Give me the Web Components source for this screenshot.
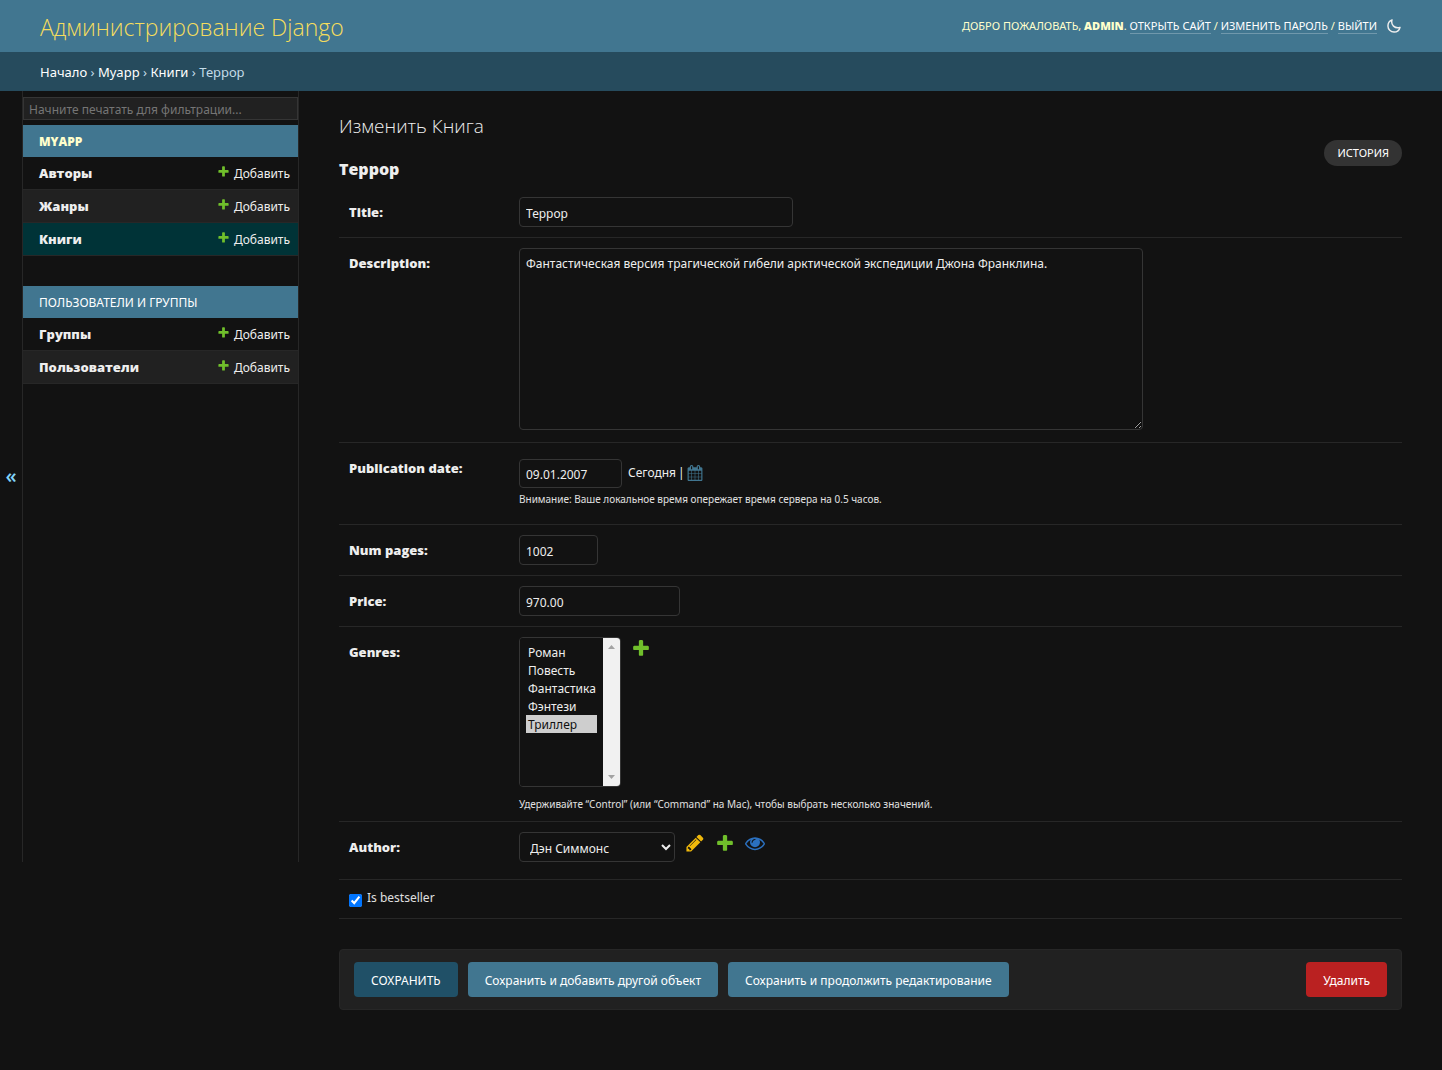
<!DOCTYPE html>
<html lang="ru">
<head>
<meta charset="utf-8">
<meta name="viewport" content="width=device-width, initial-scale=1">
<title>Террор | Изменить Книга | Администрирование Django</title>
<style>
  :root {
    --primary: #417690;
    --secondary: #264b5d;
    --accent: #ffffcc;
    --title: #f5dd5d;
    --body-bg: #121212;
    --darkened-bg: #212121;
    --body-fg: #eeeeee;
    --quiet-fg: #e0e0e0;
    --hairline: #272727;
    --border: #353535;
    --link: #81d4fa;
    --heading-font: "Open Sans", "Noto Sans", sans-serif;
  }
  body {
    margin: 0;
    min-height: 100vh;
    background: var(--body-bg);
    color: var(--body-fg);
    font: 12px/18px "Noto Sans", "Open Sans", sans-serif;
  }
</style>
</head>
<body>
<admin-page></admin-page>

<template id="admin-page">
  <style>
    :host { display: block; }
    .columns { display: flex; align-items: flex-start; }
    book-form { flex: 1; min-width: 0; }
  </style>
  <admin-header></admin-header>
  <admin-breadcrumbs></admin-breadcrumbs>
  <div class="columns">
    <nav-sidebar></nav-sidebar>
    <book-form></book-form>
  </div>
</template>

<template id="admin-header">
  <style>
    :host { display: block; }
    header {
      display: flex; align-items: center; justify-content: space-between;
      min-height: 52px; padding: 0 40px; box-sizing: border-box;
      background: var(--primary); color: var(--accent);
    }
    h1 { margin: 0; padding-top: 2px; font-family: var(--heading-font); font-size: 23px; line-height: 32px; font-weight: 300; }
    h1 a { color: var(--title); text-decoration: none; }
    .tools { display: flex; align-items: center; gap: 9px; font-size: 11px; line-height: 14px; text-transform: uppercase; }
    .tools a { color: #fff; text-decoration: none; border-bottom: 1px solid rgba(255,255,255,.25); }
    strong { font-family: var(--heading-font); font-weight: 800; }
    button { display: flex; padding: 0; border: 0; background: none; color: var(--body-fg); }
    svg { width: 16px; height: 16px; }
  </style>
  <header>
    <h1><a href="#">Администрирование Django</a></h1>
    <div class="tools">
      <span>Добро пожаловать, <strong>admin</strong>. <a href="#">Открыть сайт</a> / <a href="#">Изменить пароль</a> / <a href="#">Выйти</a></span>
      <button type="button" aria-label="Переключить тему">
        <svg viewBox="0 0 512 512" fill="none" stroke="currentColor" stroke-width="46" stroke-linejoin="round"><path d="M195 60C120 90 62 165 62 253c0 108 88 196 196 196 92 0 170-63 191-150-22 9-46 14-71 14-108 0-196-82-196-182 0-25 5-49 13-71z"/></svg>
      </button>
    </div>
  </header>
</template>

<template id="admin-breadcrumbs">
  <style>
    :host { display: block; background: var(--secondary); color: #c4dce8; font-size: 13px; }
    nav { padding: 11px 40px 10px; }
    a { color: #fff; text-decoration: none; }
  </style>
  <nav aria-label="Навигация"><a href="#">Начало</a> › <a href="#">Myapp</a> › <a href="#">Книги</a> › Террор</nav>
</template>

<template id="nav-sidebar">
  <style>
    :host { display: flex; flex: 0 0 299px; min-height: calc(100vh - 299px); }
    .toggle {
      flex: 0 0 23px; padding: 0 0 2px; border: 0; border-right: 1px solid var(--hairline);
      background: none; color: var(--link); font: 600 20px/20px var(--heading-font);
    }
    nav { flex: 1; padding-top: 6px; border-right: 1px solid var(--hairline); }
    input {
      display: block; width: 100%; height: 23px; box-sizing: border-box; margin: 0 0 5px; padding: 2px 5px 1px;
      border: 1px solid var(--border); background: var(--darkened-bg); color: var(--body-fg);
      font: inherit; border-radius: 0;
    }
    input::placeholder { color: #757575; }
  </style>
  <button class="toggle" type="button" aria-label="Свернуть навигацию">«</button>
  <nav aria-label="Боковая панель">
    <input type="search" placeholder="Начните печатать для фильтрации..." aria-label="Фильтр навигации">
    <app-module current>
      <span slot="title">Myapp</span>
      <model-row>Авторы</model-row>
      <model-row alt>Жанры</model-row>
      <model-row current>Книги</model-row>
    </app-module>
    <app-module>
      <span slot="title">Пользователи и группы</span>
      <model-row>Группы</model-row>
      <model-row alt>Пользователи</model-row>
    </app-module>
  </nav>
</template>

<template id="app-module">
  <style>
    :host { display: block; margin-bottom: 30px; }
    h2 { margin: 0; padding: 9px 16px 7px; background: var(--primary); font-size: 12px; line-height: 16px; font-weight: 400; text-transform: uppercase; }
    a { color: #fff; text-decoration: none; }
    :host([current]) h2 { font-family: var(--heading-font); font-weight: 800; }
    :host([current]) a { color: var(--accent); }
  </style>
  <h2><a href="#"><slot name="title"></slot></a></h2>
  <slot></slot>
</template>

<template id="model-row">
  <style>
    :host {
      display: flex; justify-content: space-between; padding: 7px 8px 7px 16px;
      border-bottom: 1px solid var(--hairline);
    }
    :host([alt]) { background: var(--darkened-bg); }
    :host([current]) { background: #003337; }
    a { color: var(--body-fg); text-decoration: none; }
    .name { font-family: var(--heading-font); font-size: 13px; font-weight: 800; }
    .add { display: flex; gap: 4px; margin: 1px 0 -1px; }
  </style>
  <a class="name" href="#"><slot></slot></a>
  <a class="add" href="#"><admin-icon name="add" size="13"></admin-icon>Добавить</a>
</template>

<template id="form-row">
  <style>
    :host { display: flex; padding: 10px; border-bottom: 1px solid var(--hairline); }
    .label { flex: 0 0 170px; padding-top: 6px; font-family: var(--heading-font); font-size: 13px; font-weight: 800; }
    .field { flex: 1; min-width: 0; }
    :host([plain]) .label { display: none; }
  </style>
  <div class="label"><slot name="label"></slot></div>
  <div class="field"><slot></slot></div>
</template>

<template id="submit-row">
  <style>
    :host {
      display: flex; gap: 10px; margin-top: 30px; padding: 12px 14px;
      background: var(--darkened-bg); border: 1px solid var(--hairline); border-radius: 4px;
    }
    button, a {
      height: 35px; padding: 2px 17px 0; border: 0; border-radius: 4px; box-sizing: border-box;
      background: var(--primary); color: #fff; font: inherit; line-height: 34px; text-decoration: none;
    }
    .default { background: #205067; text-transform: uppercase; }
    .delete { margin-left: auto; background: #ba2121; }
  </style>
  <button class="default" type="submit">Сохранить</button>
  <button type="submit">Сохранить и добавить другой объект</button>
  <button type="submit">Сохранить и продолжить редактирование</button>
  <a class="delete" href="#">Удалить</a>
</template>

<template id="book-form">
  <style>
    :host { display: block; padding: 24px 40px 60px; }
    .head { display: flex; justify-content: space-between; align-items: flex-end; }
    h1, h2 { font-family: var(--heading-font); }
    h1 { margin: 0 0 22px; font-size: 19px; line-height: 22px; font-weight: 300; }
    h2 { margin: 0; font-size: 16px; line-height: 20px; font-weight: 800; }
    .history {
      margin-bottom: 13px; padding: 6px 13px; border-radius: 15px; background: #333333;
      color: #fff; font-size: 11px; line-height: 14px; text-decoration: none; text-transform: uppercase;
    }
    form { padding-top: 8px; }
    input, textarea, select {
      display: block; box-sizing: border-box; margin: 0; padding: 6px 6px 4px; height: 30px; max-width: 100%;
      border: 1px solid var(--border); border-radius: 4px;
      background: var(--body-bg); color: var(--body-fg); font: inherit;
    }
    .title { width: 274px; }
    .number { width: 79px; }
    .price { width: 161px; }
    input.date { width: 103px; height: 29px; padding-bottom: 5px; }
    textarea { width: 624px; height: 182px; margin-bottom: 2px; }
    .datetime { display: flex; gap: 6px; padding-top: 6px; }
    .datetime span { display: flex; gap: 2px; padding-top: 5px; }
    .datetime admin-icon { padding-top: 1px; }
    .help { margin: 4px 0 0; color: var(--quiet-fg); font-size: 10px; line-height: 14px; }
    .date-help { padding-bottom: 8px; }
    .list-help { margin-top: 10px; }
    a { color: var(--body-fg); text-decoration: none; }
    .related { display: flex; gap: 10px; }
    .related a { display: flex; height: 22px; align-items: center; }
    .related.single { padding-bottom: 7px; }
    .listbox {
      display: flex; box-sizing: border-box; width: 102px; height: 150px;
      border: 1px solid var(--border); border-radius: 4px; overflow: hidden;
    }
    .listbox select { flex: 1; min-width: 0; height: auto; padding: 5px 6px; border: 0; border-radius: 0; overflow: hidden; }
    option { height: 18px; min-height: 18px; padding: 1px 2px 0; line-height: 18px; box-sizing: border-box; }
    .listbox option:checked { background: #cecece linear-gradient(#cecece, #cecece); color: #101010; }
    .scrollbar {
      display: flex; flex: 0 0 17px; flex-direction: column; align-items: center; justify-content: space-between;
      padding: 7px 0; box-sizing: border-box; background: #f1f1f1;
    }
    .scrollbar svg { width: 7px; height: 4px; fill: #a3a3a3; }
    .author { width: 156px; padding: 3px 6px 1px; }
    .check { display: flex; gap: 5px; margin-top: -1px; padding-bottom: 1px; color: var(--quiet-fg); }
    input[type=checkbox] { width: 13px; height: 13px; margin: 5px 0 0; padding: 0; }
  </style>
  <div class="head">
    <div>
      <h1>Изменить Книга</h1>
      <h2>Террор</h2>
    </div>
    <a class="history" href="#">История</a>
  </div>
  <form>
    <form-row>
      <label slot="label" for="title">Title:</label>
      <input class="title" id="title" type="text" value="Террор">
    </form-row>
    <form-row>
      <label slot="label" for="description">Description:</label>
      <textarea id="description">Фантастическая версия трагической гибели арктической экспедиции Джона Франклина.</textarea>
    </form-row>
    <form-row>
      <label slot="label" for="date">Publication date:</label>
      <div class="datetime">
        <input class="date" id="date" type="text" value="09.01.2007">
        <span><a href="#">Сегодня</a> | <a href="#" aria-label="Выбрать дату"><admin-icon name="calendar" size="16"></admin-icon></a></span>
      </div>
      <p class="help date-help">Внимание: Ваше локальное время опережает время сервера на 0.5 часов.</p>
    </form-row>
    <form-row>
      <label slot="label" for="pages">Num pages:</label>
      <input class="number" id="pages" type="text" value="1002">
    </form-row>
    <form-row>
      <label slot="label" for="price">Price:</label>
      <input class="price" id="price" type="text" value="970.00">
    </form-row>
    <form-row>
      <label slot="label" for="genres">Genres:</label>
      <div class="related">
        <div class="listbox">
          <select id="genres" multiple>
            <option>Роман</option>
            <option>Повесть</option>
            <option>Фантастика</option>
            <option>Фэнтези</option>
            <option selected>Триллер</option>
          </select>
          <div class="scrollbar" aria-hidden="true">
            <svg viewBox="0 0 8 4" preserveAspectRatio="none"><path d="M0 4L4 0L8 4z"/></svg>
            <svg viewBox="0 0 8 4" preserveAspectRatio="none"><path d="M0 0L4 4L8 0z"/></svg>
          </div>
        </div>
        <a href="#" aria-label="Добавить жанр"><admin-icon name="add" size="20"></admin-icon></a>
      </div>
      <p class="help list-help">Удерживайте “Control” (или “Command” на Mac), чтобы выбрать несколько значений.</p>
    </form-row>
    <form-row>
      <label slot="label" for="author">Author:</label>
      <div class="related single">
        <select class="author" id="author"><option>Дэн Симмонс</option></select>
        <a href="#" aria-label="Изменить автора"><admin-icon name="change" size="20"></admin-icon></a>
        <a href="#" aria-label="Добавить автора"><admin-icon name="add" size="20"></admin-icon></a>
        <a href="#" aria-label="Просмотреть автора"><admin-icon name="view" size="20"></admin-icon></a>
      </div>
    </form-row>
    <form-row plain>
      <div class="check"><input id="bestseller" type="checkbox" checked><label for="bestseller">Is bestseller</label></div>
    </form-row>
    <submit-row></submit-row>
  </form>
</template>

<script>
  // Elements whose markup and styles come straight from the template of the same name.
  function fromTemplate(name) {
    customElements.define(name, class extends HTMLElement {
      constructor() {
        super();
        this.attachShadow({ mode: 'open' })
          .append(document.getElementById(name).content.cloneNode(true));
      }
    });
  }

  const ICONS = {
    add: ['#70bf2b', 'M1600 796v192q0 40-28 68t-68 28h-416v416q0 40-28 68t-68 28h-192q-40 0-68-28t-28-68v-416h-416q-40 0-68-28t-28-68v-192q0-40 28-68t68-28h416v-416q0-40 28-68t68-28h192q40 0 68 28t28 68v416h416q40 0 68 28t28 68z'],
    change: ['#efb80b', 'M491 1536l91-91-235-235-91 91v107h128v128h107zm523-928q0-22-22-22-10 0-17 7l-542 542q-7 7-7 17 0 22 22 22 10 0 17-7l542-542q7-7 7-17zm-54-192l416 416-832 832h-416v-416zm683 96q0 53-37 90l-166 166-416-416 166-165q36-38 90-38 53 0 91 38l235 234q37 39 37 91z'],
    view: ['#2b70bf', 'M1664 960q-152-236-381-353 61 104 61 225 0 185-131.5 316.5t-316.5 131.5-316.5-131.5-131.5-316.5q0-121 61-225-229 117-381 353 133 205 333.5 326.5t434.5 121.5 434.5-121.5 333.5-326.5zm-720-384q0-20-14-34t-34-14q-125 0-214.5 89.5t-89.5 214.5q0 20 14 34t34 14 34-14 14-34q0-86 61-147t147-61q20 0 34-14t14-34zm848 384q0 34-20 69-140 230-376.5 368.5t-499.5 138.5-499.5-139-376.5-368q-20-35-20-69t20-69q140-229 376.5-368t499.5-139 499.5 139 376.5 368q20 35 20 69z'],
    calendar: ['#417690', 'M192 1664h288v-288h-288v288zm352 0h320v-288h-320v288zm-352-352h288v-320h-288v320zm352 0h320v-320h-320v320zm-352-384h288v-288h-288v288zm736 736h320v-288h-320v288zm-384-736h320v-288h-320v288zm768 736h288v-288h-288v288zm-384-352h320v-320h-320v320zm-352-864v-288q0-13-9.5-22.5t-22.5-9.5h-64q-13 0-22.5 9.5t-9.5 22.5v288q0 13 9.5 22.5t22.5 9.5h64q13 0 22.5-9.5t9.5-22.5zm736 864h288v-320h-288v320zm-384-384h320v-288h-320v288zm384 0h288v-288h-288v288zm32-480v-288q0-13-9.5-22.5t-22.5-9.5h-64q-13 0-22.5 9.5t-9.5 22.5v288q0 13 9.5 22.5t22.5 9.5h64q13 0 22.5-9.5t9.5-22.5zm384-64v1280q0 52-38 90t-90 38h-1408q-52 0-90-38t-38-90v-1280q0-52 38-90t90-38h128v-96q0-66 47-113t113-47h64q66 0 113 47t47 113v96h384v-96q0-66 47-113t113-47h64q66 0 113 47t47 113v96h128q52 0 90 38t38 90z']
  };

  customElements.define('admin-icon', class extends HTMLElement {
    constructor() {
      super();
      this.attachShadow({ mode: 'open' });
    }
    connectedCallback() {
      const [fill, path] = ICONS[this.getAttribute('name')];
      const size = this.getAttribute('size');
      this.shadowRoot.innerHTML =
        `<style>:host{display:inline-block;flex:none}svg{display:block}</style>
         <svg width="${size}" height="${size}" viewBox="0 0 1792 1792" aria-hidden="true"><path fill="${fill}" d="${path}"/></svg>`;
    }
  });

  ['model-row', 'app-module', 'form-row', 'submit-row', 'admin-header',
   'admin-breadcrumbs', 'nav-sidebar', 'book-form', 'admin-page'].forEach(fromTemplate);
</script>
</body>
</html>
